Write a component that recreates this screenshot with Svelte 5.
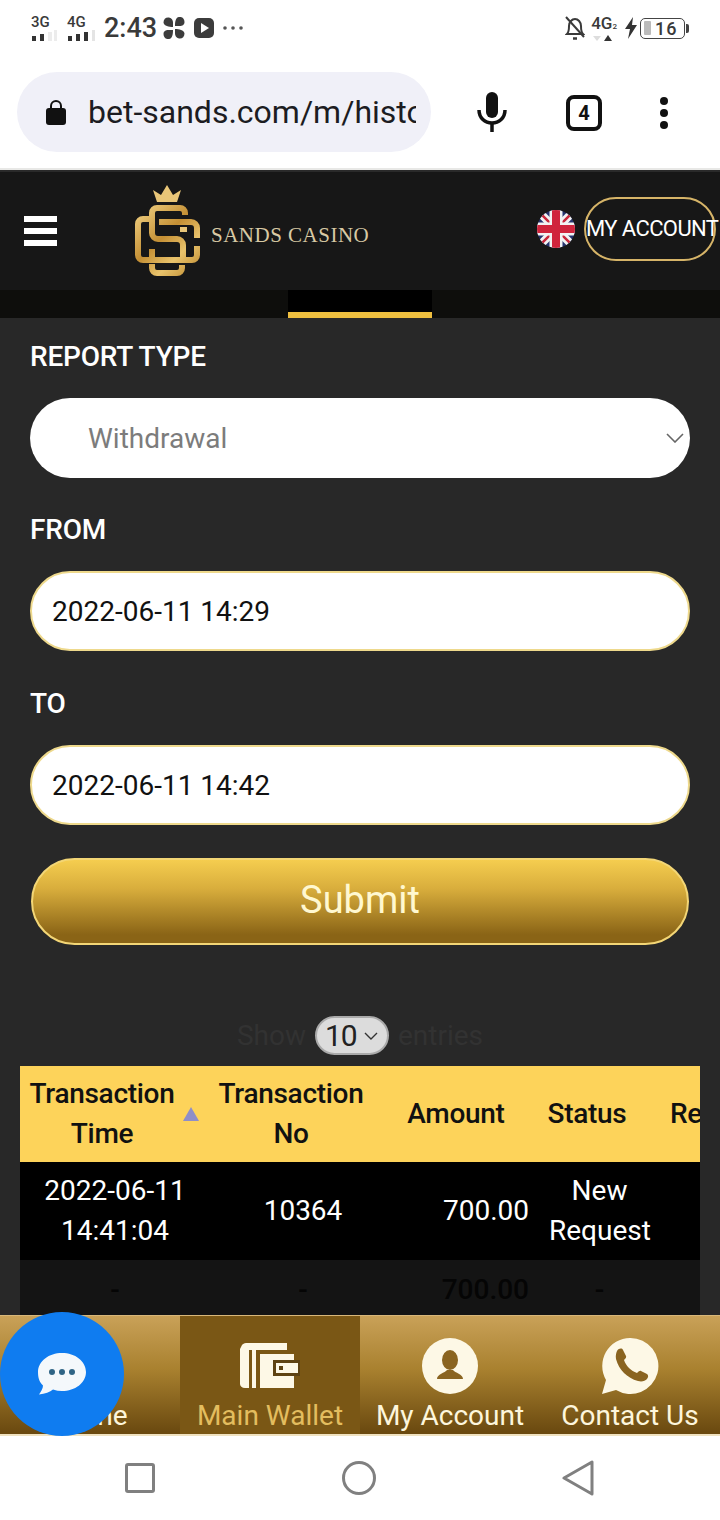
<script lang="ts">
  const tabs = [
    { label: "Home", icon: "home" },
    { label: "Main Wallet", icon: "wallet", active: true },
    { label: "My Account", icon: "user" },
    { label: "Contact Us", icon: "phone" },
  ];
</script>

<div class="page">
  <div class="status">
    <div class="sig"><span>3G</span><svg width="26" height="11" viewBox="0 0 26 11"><path d="M1 6h4v5H1zM9 4h4v7H9z" fill="#333"/><path d="M17 2h4v9h-4zM23 0h3v11h-3z" fill="#ececec"/></svg></div>
    <div class="sig second"><span>4G</span><svg width="30" height="11" viewBox="0 0 30 11"><path d="M1 6h4v5H1zM9 4h4v7H9zM17 2h4v9h-4z" fill="#333"/><path d="M25 0h3v11h-3z" fill="#e4e4e4"/></svg></div>
    <span class="clock">2:43</span>
    <svg class="fan" width="22" height="22" viewBox="0 0 22 22" fill="#3c3c3c"><path d="M10 10C6 10 1 9 .5 5.500 .5 2 3 0 6 .5c3 .5 4 3 4 5zM12 9c0-4 .5-8.500 4-9 3.500-.5 5.500 2 5.500 5 0 3-2.500 4-4.500 4zM12 12c4 0 9 1 9.500 4.500 0 3.500-2.500 5.500-5.500 5-3-.5-4-3-4-5zM10 13c0 4-.5 8.500-4 9-3.500.5-5.500-2-5.500-5 0-3 2.500-4 4.500-4z"/></svg>
    <svg class="play" width="20" height="20" viewBox="0 0 20 20"><rect width="20" height="20" rx="5" fill="#3c3c3c"/><path d="M7 5l8 5-8 5z" fill="#fff"/></svg>
    <svg width="22" height="6" viewBox="0 0 22 6" fill="#555"><circle cx="3" cy="3" r="1.800"/><circle cx="11" cy="3" r="1.800"/><circle cx="19" cy="3" r="1.800"/></svg>

    <div class="status-right">
      <svg width="20" height="24" viewBox="0 0 20 24" fill="none" stroke="#3a3a3a" stroke-width="2"><path d="M2 18c2-2 2-4 2-8 0-4 3-7 6-7s6 3 6 7c0 4 0 6 2 8z"/><path d="M1 1l18 20"/><path d="M8 22.500h4" stroke-width="2.500"/></svg>
      <div class="net"><span>4G<small>2</small></span><svg width="22" height="7" viewBox="0 0 22 7"><path d="M2 1h8l-4 5z" fill="#ddd"/><path d="M17 0l4 6h-8z" fill="#333"/></svg></div>
      <svg class="bolt" width="12" height="22" viewBox="0 0 12 22" fill="#333"><path d="M8 0L0 12h5l-2 10 9-14H7z"/></svg>
      <div class="battery"><i></i><b>16</b></div>
    </div>
  </div>

  <div class="browser">
    <div class="url">
      <svg width="20" height="27" viewBox="0 0 20 27"><path d="M5 11V7a5 5 0 0 1 10 0v4" fill="none" stroke="#111" stroke-width="2"/><rect y="9" width="20" height="17" rx="3" fill="#111"/></svg>
      <span class="url-text">bet-sands.com/m/history</span>
    </div>
    <svg class="mic" width="30" height="42" viewBox="0 0 30 42"><rect x="9" y="1" width="12" height="26" rx="6" fill="#111"/><path d="M2 19c0 8 6 13 13 13s13-5 13-13" fill="none" stroke="#111" stroke-width="3.500"/><path d="M15 31v10" stroke="#111" stroke-width="3.500"/></svg>
    <div class="tabs-count">4</div>
    <svg class="more" width="10" height="34" viewBox="0 0 10 34" fill="#111"><circle cx="5" cy="5" r="4"/><circle cx="5" cy="17" r="4"/><circle cx="5" cy="29" r="4"/></svg>
  </div>

  <header class="site">
    <div class="burger"><i></i><i></i><i></i></div>
    <svg class="logo" width="66" height="92" viewBox="0 0 66 92" fill="none" stroke="url(#gold)" stroke-width="6">
      <defs>
        <linearGradient id="gold" gradientUnits="userSpaceOnUse" x1="0" y1="20" x2="66" y2="90">
          <stop offset="0" stop-color="#f6d98c"/>
          <stop offset="0.45" stop-color="#c48f34"/>
          <stop offset="0.7" stop-color="#e9c36c"/>
          <stop offset="1" stop-color="#b98429"/>
        </linearGradient>
      </defs>
      <path d="M22 18L18 6l8 5 6-10 6 10 8-5-4 12z" fill="#e9c678" stroke="none"/>
      <path d="M50 31v-2a5 5 0 0 0-5-5H22a5 5 0 0 0-5 5v20a6 6 0 0 0 6 6h19a6 6 0 0 1 6 6v13"/>
      <path d="M24 38h32a6 6 0 0 1 6 6v10"/>
      <path d="M18 35H8a5 5 0 0 0-5 5v31a5 5 0 0 0 5 5h49a5 5 0 0 0 5-5v-9"/>
      <path d="M17 65v9"/>
      <path d="M17 80v4a5 5 0 0 0 5 5h20a5 5 0 0 0 5-5v-3"/>
      <rect x="45" y="43" width="7" height="5" fill="#e9c678" stroke="none"/>
    </svg>
    <span class="brand">SANDS CASINO</span>
    <svg class="flag" width="38" height="38" viewBox="0 0 38 38">
      <defs><clipPath id="round"><circle cx="19" cy="19" r="19"/></clipPath></defs>
      <g clip-path="url(#round)">
        <rect width="38" height="38" fill="#26336f"/>
        <path d="M0 0l38 38M38 0L0 38" stroke="#f2f2f2" stroke-width="8"/>
        <path d="M0 0l38 38M38 0L0 38" stroke="#c8283c" stroke-width="2.500"/>
        <path d="M19 0v38M0 19h38" stroke="#f2f2f2" stroke-width="13"/>
        <path d="M19 0v38M0 19h38" stroke="#d0243c" stroke-width="8"/>
      </g>
    </svg>
    <div class="account">MY ACCOUNT</div>
  </header>

  <nav class="subnav"><div class="sub-active"></div></nav>

  <main>
    <div class="label first">REPORT TYPE</div>
    <div class="select">
      <span>Withdrawal</span>
      <svg width="18" height="10" viewBox="0 0 18 10" fill="none" stroke="#666" stroke-width="1.600"><path d="M1 1l8 8 8-8"/></svg>
    </div>
    <div class="label">FROM</div>
    <div class="field">2022-06-11 14:29</div>
    <div class="label">TO</div>
    <div class="field">2022-06-11 14:42</div>
    <div class="submit">Submit</div>

    <div class="show">
      <span>Show</span>
      <div class="len">10<svg width="14" height="8" viewBox="0 0 14 8" fill="none" stroke="#333" stroke-width="1.400"><path d="M1 1l6 6 6-6"/></svg></div>
      <span>entries</span>
    </div>

    <div class="table">
      <div class="thead">
        <div class="sorted">Transaction<br />Time<i></i></div>
        <div>Transaction<br />No</div>
        <div>Amount</div>
        <div>Status</div>
        <div class="cut">Remark</div>
      </div>
      <div class="trow">
        <div>2022-06-11<br />14:41:04</div>
        <div>10364</div>
        <div class="num">700.00</div>
        <div>New<br />Request</div>
      </div>
      <div class="trow tfoot">
        <div>-</div>
        <div>-</div>
        <div class="num">700.00</div>
        <div>-</div>
      </div>
    </div>
  </main>

  <div class="tabbar">
    {#each tabs as tab}
      <div class="tab" class:active={tab.active}>
        <div class="tab-icon">
          {#if tab.icon === "wallet"}
            <svg width="60" height="46" viewBox="0 0 60 46" fill="#fdf8e6">
              <path d="M2 2c1-1 2-2 4-2h41v7H9v38H5c-3 0-5-2-5-4V6z"/>
              <path d="M12 7h4v38h-4z"/>
              <path d="M20 11h34v34H20z"/>
              <path d="M33 17h27v16H33z" fill="#5e4312"/>
              <path d="M36 20h22v10H36z"/>
              <rect x="39" y="23" width="4" height="4" fill="#5e4312"/>
            </svg>
          {:else if tab.icon === "user"}
            <svg width="58" height="58" viewBox="0 0 58 58">
              <circle cx="29" cy="29" r="28" fill="#fdf8e6"/>
              <ellipse cx="29" cy="23" rx="8" ry="10" fill="#8a6420"/>
              <path d="M16 42c0-5 8-6 10-9h6c2 3 10 4 10 9z" fill="#8a6420"/>
            </svg>
          {:else if tab.icon === "phone"}
            <svg width="58" height="58" viewBox="0 0 58 58">
              <path d="M29 1a28 28 0 1 1-14 52L1 57l4-14A28 28 0 0 1 29 1z" fill="#fdf8e6"/>
              <path d="M16 14c2-3 5-3 6-1l3 6c.500 1 0 2-2 4 2 6 7 11 13 13 2-2 3-2.500 4-2l6 3c1.500 1 1.500 3 0 5-2 2-5 3-9 2-11-3-19-11-22-22-.500-3 0-6 1-8z" fill="#8a6420"/>
            </svg>
          {/if}
        </div>
        <span>{tab.label}</span>
      </div>
    {/each}
  </div>

  <div class="sysnav">
    <svg width="30" height="30" viewBox="0 0 30 30" fill="none" stroke="#808080" stroke-width="3"><rect x="1.500" y="1.500" width="27" height="27" rx="1.500"/></svg>
    <svg width="34" height="34" viewBox="0 0 34 34" fill="none" stroke="#808080" stroke-width="3"><circle cx="17" cy="17" r="15.500"/></svg>
    <svg width="32" height="36" viewBox="0 0 32 36" fill="none" stroke="#808080" stroke-width="3" stroke-linejoin="round"><path d="M30 2v32L2 18z"/></svg>
  </div>

  <div class="chat">
    <svg width="50" height="44" viewBox="0 0 50 44">
      <path d="M25 1c13 0 24 8 24 19s-11 19-24 19c-3 0-6-.500-9-1.500-3 2.500-8 4.500-14 5 2-3 4-6 4-9C2 30 1 25 1 20 1 9 12 1 25 1z" fill="#f4f8fb"/>
      <circle cx="15" cy="20" r="3" fill="#2f6485"/><circle cx="25" cy="20" r="3" fill="#2f6485"/><circle cx="35" cy="20" r="3" fill="#2f6485"/>
    </svg>
  </div>
</div>

<style>
  :global(body) {
    margin: 0;
    background: #fff;
  }
  .page {
    position: relative;
    width: 720px;
    height: 1520px;
    overflow: hidden;
    display: flex;
    flex-direction: column;
    font-family: Roboto, "Liberation Sans", sans-serif;
  }

  /* android status bar */
  .status {
    height: 56px;
    padding: 0 35px 0 31px;
    display: flex;
    align-items: center;
    gap: 6px;
    color: #3a3a3a;
  }
  .sig {
    display: flex;
    flex-direction: column;
    margin-right: 4px;
    font-size: 15px;
    line-height: 15px;
    font-weight: 500;
  }
  .sig.second {
    margin-right: 1px;
  }
  .sig svg {
    display: block;
  }
  .clock {
    font-size: 27px;
    font-weight: 500;
  }
  .fan {
    margin-right: 3px;
  }
  .play {
    margin-right: 2px;
  }
  .status-right {
    margin-left: auto;
    display: flex;
    align-items: center;
    gap: 6px;
  }
  .net {
    display: flex;
    flex-direction: column;
    margin-right: 2px;
    font-size: 17px;
    line-height: 17px;
    font-weight: 500;
  }
  .net small {
    font-size: 8px;
  }
  .bolt {
    margin-right: -3px;
  }
  .battery {
    position: relative;
    width: 40px;
    height: 19px;
    border: 1.500px solid #444;
    border-radius: 5px;
    display: flex;
    align-items: center;
    padding-left: 3px;
    gap: 4px;
    font-size: 18px;
  }
  .battery::after {
    content: "";
    position: absolute;
    right: -5px;
    top: 5px;
    width: 3px;
    height: 9px;
    background: #444;
    border-radius: 0 2px 2px 0;
  }
  .battery i {
    width: 7px;
    height: 14px;
    background: #bbb;
    border-radius: 1px;
  }
  .battery b {
    font-weight: 500;
    letter-spacing: 1px;
  }

  /* chrome toolbar */
  .browser {
    height: 114px;
    box-sizing: border-box;
    padding: 16px 0 0 17px;
    border-bottom: 2px solid #e8e8e6;
    display: flex;
    align-items: flex-start;
  }
  .url {
    width: 414px;
    height: 80px;
    box-sizing: border-box;
    padding: 0 15px 0 29px;
    border-radius: 40px;
    background: #f0f0f8;
    display: flex;
    align-items: center;
    gap: 22px;
  }
  .url svg {
    flex: none;
  }
  .url-text {
    font-size: 32px;
    color: #1c1c22;
    white-space: nowrap;
    overflow: hidden;
  }
  .mic {
    margin: 19px 0 0 46px;
  }
  .tabs-count {
    margin: 23px 0 0 59px;
    width: 36px;
    height: 36px;
    box-sizing: border-box;
    border: 4px solid #111;
    border-radius: 8px;
    font-size: 20px;
    font-weight: 700;
    line-height: 28px;
    text-align: center;
    color: #111;
  }
  .more {
    margin: 24px 0 0 57px;
  }

  /* site header */
  .site {
    height: 120px;
    box-sizing: border-box;
    background: #171717;
    border-top: 2px solid #2a2a2a;
    display: flex;
    align-items: center;
    padding: 0 4px 0 24px;
    color: #fff;
  }
  .burger {
    width: 33px;
    display: flex;
    flex-direction: column;
    gap: 6px;
  }
  .burger i {
    height: 6px;
    background: #fff;
  }
  .logo {
    margin: -2px 0 0 78px;
  }
  .brand {
    margin: 8px 0 0 10px;
    font-family: "Liberation Serif", serif;
    font-size: 21px;
    letter-spacing: 0.5px;
    color: #d8c9a4;
    white-space: nowrap;
  }
  .flag {
    margin: -4px 0 0 auto;
  }
  .account {
    margin: -4px 0 0 9px;
    width: 132px;
    height: 64px;
    box-sizing: border-box;
    border: 2px solid #d6b468;
    border-radius: 32px;
    font-size: 22px;
    letter-spacing: -0.6px;
    line-height: 60px;
    text-align: center;
    white-space: nowrap;
  }

  .subnav {
    height: 28px;
    background: #0e0e0c;
    display: flex;
    justify-content: center;
  }
  .sub-active {
    width: 144px;
    box-sizing: border-box;
    background: #000;
    border-bottom: 6px solid #efbf3f;
  }

  /* form */
  main {
    flex: 1;
    min-height: 0;
    overflow: hidden;
    background: #282828;
    padding: 0 20px;
  }
  .label {
    margin: 32px 10px 21px 10px;
    height: 40px;
    line-height: 40px;
    font-size: 28px;
    font-weight: 500;
    letter-spacing: -0.2px;
    color: #fff;
  }
  .label.first {
    margin-top: 19px;
  }
  .select,
  .field {
    margin: 0 10px;
    height: 80px;
    box-sizing: border-box;
    border-radius: 40px;
    background: #fff;
    display: flex;
    align-items: center;
    font-size: 28px;
  }
  .select {
    padding: 0 6px 0 58px;
    justify-content: space-between;
    color: #7c7c7c;
  }
  .field {
    padding-left: 20px;
    border: 2px solid #eed98c;
    color: #111;
  }
  .field + .label {
    margin-top: 33px;
  }
  .submit {
    margin: 33px 11px 0;
    height: 87px;
    box-sizing: border-box;
    border-radius: 44px;
    border: 2px solid #f3d676;
    background: linear-gradient(#f5cd4f, #d8ad3c 35%, #8a6416 90%);
    color: #fff8d0;
    font-size: 38px;
    line-height: 80px;
    text-align: center;
  }
  .show {
    margin-top: 71px;
    height: 39px;
    display: flex;
    justify-content: center;
    align-items: center;
    gap: 9px;
    font-size: 28px;
    color: #323232;
  }
  .len {
    width: 74px;
    height: 39px;
    box-sizing: border-box;
    padding-left: 8px;
    border-radius: 20px;
    background: #dcdcdc;
    border: 2px solid #aaa;
    display: flex;
    align-items: center;
    gap: 7px;
    font-size: 30px;
    letter-spacing: -1px;
    color: #222;
  }
  .table {
    margin-top: 11px;
  }
  .thead,
  .trow {
    display: grid;
    align-items: center;
    text-align: center;
  }
  .thead {
    height: 96px;
    grid-template-columns: 190px 162px 168px 94px 1fr;
    background: #fdd35a;
    color: #111;
    font-size: 28px;
    font-weight: 500;
    letter-spacing: -0.3px;
    line-height: 40px;
    overflow: hidden;
  }
  .sorted {
    position: relative;
    padding-right: 26px;
  }
  .sorted i {
    position: absolute;
    right: 11px;
    top: 33px;
    border-left: 8px solid transparent;
    border-right: 8px solid transparent;
    border-bottom: 14px solid #8f8ec8;
  }
  .cut {
    white-space: nowrap;
    text-align: left;
    padding-left: 36px;
  }
  .trow {
    height: 98px;
    grid-template-columns: 190px 186px 153px 101px;
    background: #000;
    color: #fff;
    font-size: 28px;
    line-height: 40px;
  }
  .num {
    text-align: right;
    padding-right: 20px;
  }
  .tfoot {
    height: 60px;
    background: #141414;
    color: #050505;
    font-weight: 500;
  }

  /* bottom tabs */
  .tabbar {
    height: 121px;
    display: grid;
    grid-template-columns: repeat(4, 180px);
    background: linear-gradient(#c9a158, #a9812f 45%, #6b4a10 98%);
    border-top: 1px solid #d8b77a;
    box-sizing: border-box;
    border-bottom: 2px solid #f0e2c0;
  }
  .tab {
    display: flex;
    flex-direction: column;
    align-items: center;
    color: #fdf6dc;
    font-size: 28px;
    line-height: 34px;
    white-space: nowrap;
  }
  .tab.active {
    background: #7a5715;
    color: #e3bd5f;
  }
  .tab-icon {
    height: 58px;
    margin: 21px 0 4px;
    display: flex;
    align-items: center;
  }

  .sysnav {
    height: 84px;
    display: flex;
    justify-content: space-between;
    align-items: center;
    padding: 0 126px 0 125px;
  }

  /* floating chat button */
  .chat {
    position: absolute;
    left: 0;
    top: 1312px;
    width: 124px;
    height: 124px;
    border-radius: 50%;
    background: #0f7cf0;
    display: flex;
    align-items: center;
    justify-content: center;
  }
</style>
